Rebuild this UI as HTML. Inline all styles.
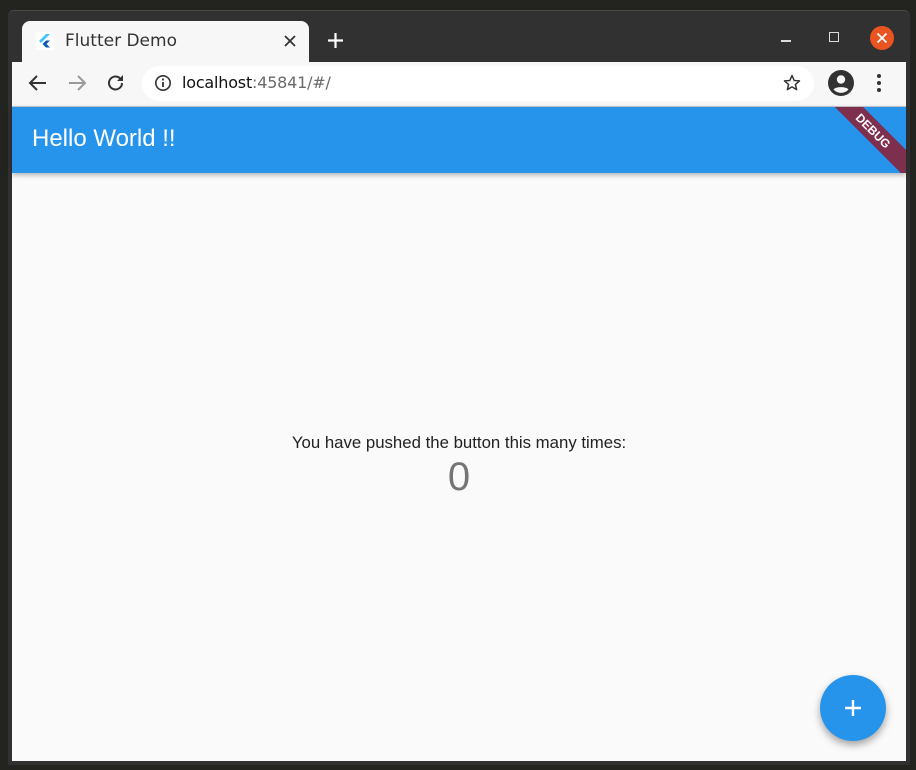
<!DOCTYPE html>
<html><head><meta charset="utf-8"><style>
html,body{margin:0;padding:0;width:916px;height:770px;overflow:hidden;background:#23231f;font-family:"Liberation Sans",sans-serif}
.win{position:absolute;left:8px;top:10px;width:902px;height:754px;background:#323131;border-radius:6px 6px 0 0;border-top:1px solid #4a4a4a}
.tab{position:absolute;left:22px;top:21px;width:287px;height:42px;background:#f7f7f7;border-radius:8px 8px 0 0}
.tab .t{position:absolute;left:43px;top:10px;font-family:"DejaVu Sans",sans-serif;font-size:17px;color:#333}
.toolbar{position:absolute;left:12px;top:62px;width:894px;height:44px;background:#f7f7f7;border-bottom:1px solid #c8c8c8}
.omni{position:absolute;left:142px;top:66px;width:672px;height:35px;background:#fff;border-radius:18px}
.url{position:absolute;left:182px;top:73px;font-family:"DejaVu Sans",sans-serif;font-size:16px;color:#111;letter-spacing:-0.2px}
.url span{color:#6b6b6b}
.appbar{position:absolute;left:12px;top:107px;width:894px;height:66px;background:#2794ec;box-shadow:0 2px 5px rgba(0,0,0,.3);overflow:hidden;z-index:2}
.appbar .h{position:absolute;left:20px;top:18px;color:#fff;font-size:24px}
.ribbon{position:absolute;right:-42px;top:14px;width:150px;height:20px;background:#7e2f4d;transform:rotate(45deg);color:#fff;font-size:12px;font-weight:bold;text-align:center;line-height:20px}
.body{position:absolute;left:12px;top:107px;width:894px;height:654px;background:#fafafa}
.msg{position:absolute;left:12px;width:894px;top:433px;text-align:center;font-size:16.8px;color:#222}
.cnt{position:absolute;left:12px;width:894px;top:455px;text-align:center;font-size:40px;color:#757575}
.fab{position:absolute;left:820px;top:675px;width:66px;height:66px;border-radius:50%;background:#2794ec;box-shadow:0 4px 8px rgba(0,0,0,.35);z-index:3}
</style></head><body>
<div class="win"></div>
<div class="tab"><svg style="position:absolute;left:14px;top:11px" width="18" height="18" viewBox="0 0 18 18"><rect width="18" height="18" fill="#fff"/><path d="M10 2L3 9l2 2 9-9z" fill="#40c4ff"/><path d="M10 8.5L6.5 12l3.5 3.5h4L10.5 12l3.5-3.5z" fill="#0a5ab5"/></svg><div class="t">Flutter Demo</div>
<svg style="position:absolute;left:262px;top:14px" width="12" height="12"><path d="M1 1L11 11M11 1L1 11" stroke="#333" stroke-width="1.8"/></svg></div>
<svg style="position:absolute;left:327px;top:32px" width="17" height="17"><path d="M8.5 1v15M1 8.5h15" stroke="#fff" stroke-width="2.2"/></svg>
<div style="position:absolute;left:781px;top:40px;width:10px;height:1.5px;background:#ddd"></div>
<div style="position:absolute;left:829px;top:32px;width:8px;height:8px;border:1.5px solid #ddd"></div>
<div style="position:absolute;left:870px;top:26px;width:24px;height:24px;border-radius:50%;background:#e95420"></div>
<svg style="position:absolute;left:876px;top:32px" width="12" height="12"><path d="M1.5 1.5l9 9M10.5 1.5l-9 9" stroke="#fff" stroke-width="1.8"/></svg>
<div class="toolbar"></div>
<svg style="position:absolute;left:28px;top:74px" width="20" height="18" viewBox="0 0 20 18"><path d="M18 9H3M9 2L2 9l7 7" stroke="#333" stroke-width="2" fill="none"/></svg>
<svg style="position:absolute;left:67px;top:74px" width="20" height="18" viewBox="0 0 20 18"><path d="M2 9h15M11 2l7 7-7 7" stroke="#9a9a9a" stroke-width="2" fill="none"/></svg>
<svg style="position:absolute;left:106px;top:73px" width="20" height="20" viewBox="0 0 20 20"><path d="M16 10a6.5 6.5 0 1 1-2-4.7" stroke="#333" stroke-width="2" fill="none"/><path d="M17 2v6h-6z" fill="#333"/></svg>
<div class="omni"></div>
<svg style="position:absolute;left:154px;top:74px" width="18" height="18" viewBox="0 0 18 18"><circle cx="9" cy="9" r="7.2" stroke="#333" stroke-width="1.6" fill="none"/><path d="M9 8v5" stroke="#333" stroke-width="1.8"/><circle cx="9" cy="5.5" r="1.1" fill="#333"/></svg>
<div class="url">localhost<span>:45841/#/</span></div>
<svg style="position:absolute;left:782px;top:73px" width="20" height="20" viewBox="0 0 24 24"><path d="M12 3l2.6 6 6.4.5-4.9 4.2 1.5 6.3L12 16.6 6.4 20l1.5-6.3L3 9.5l6.4-.5z" stroke="#333" stroke-width="1.8" fill="none" stroke-linejoin="round"/></svg>
<svg style="position:absolute;left:828px;top:70px" width="26" height="26" viewBox="0 0 26 26"><circle cx="13" cy="13" r="13" fill="#333"/><circle cx="13" cy="9.5" r="4.2" fill="#f7f7f7"/><path d="M5.5 19.5c2-3.2 13-3.2 15 0a10 10 0 0 1-15 0z" fill="#f7f7f7"/></svg>
<svg style="position:absolute;left:876px;top:73px" width="6" height="20"><circle cx="3" cy="3" r="2" fill="#333"/><circle cx="3" cy="10" r="2" fill="#333"/><circle cx="3" cy="17" r="2" fill="#333"/></svg>
<div class="body"></div>
<div class="appbar"><div class="h">Hello World !!</div><div class="ribbon">DEBUG</div></div>
<div class="msg">You have pushed the button this many times:</div>
<div class="cnt">0</div>
<div class="fab"><svg style="position:absolute;left:24px;top:24px" width="18" height="18"><path d="M9 1v16M1 9h16" stroke="#fff" stroke-width="2.4"/></svg></div>
</body></html>
